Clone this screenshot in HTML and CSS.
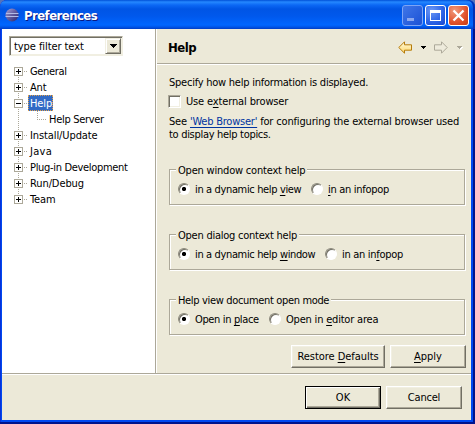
FILE: index.html
```html
<!DOCTYPE html>
<html lang="en">
<head>
<meta charset="utf-8">
<title>Preferences</title>
<link rel="stylesheet" href="styles.css">
</head>
<body>
<div class="window">
  <header class="titlebar">
    <svg class="logo" width="14" height="14" viewBox="0 0 14 14">
      <defs><linearGradient id="orb" x2="1" y2="1"><stop offset="0" stop-color="#aaa4d8"/><stop offset=".45" stop-color="#6862a4"/><stop offset="1" stop-color="#28256b"/></linearGradient></defs>
      <circle cx="7" cy="7" r="6.5" fill="url(#orb)"/>
      <path d="M1 5.5h12.5M.5 8.5h13" stroke="#b4bce6"/>
    </svg>
    <h1 class="title">Preferences</h1>
    <div class="controls">
      <span class="control dim"><svg width="21" height="21"><path d="M5 13h7v3H5z" fill="#8ba8ef"/></svg></span>
      <span class="control"><svg width="21" height="21"><path d="M5 5h11v11H5zM6 8v7h9V8z" fill="#fff" fill-rule="evenodd"/></svg></span>
      <span class="control close"><svg width="21" height="21"><path d="M5.5 5.5l10 10M15.5 5.5l-10 10" stroke="#fff" stroke-width="2.3"/></svg></span>
    </div>
  </header>
  <main class="body">
    <aside class="sidebar">
      <div class="combo"><span class="t-filter">type filter text</span><i class="drop"><svg width="7" height="4"><path d="M0 0h7v1H6v1H5v1H4v1H3V3H2V2H1V1H0z"/></svg></i></div>
      <ul class="tree">
        <li class="first"><i class="box plus"></i><span class="t-general">General</span></li>
        <li><i class="box plus"></i><span class="t-ant">Ant</span></li>
        <li><i class="box"></i><span class="selected">Help</span></li>
        <li class="child"><span class="t-server">Help Server</span></li>
        <li><i class="box plus"></i><span class="t-install">Install/Update</span></li>
        <li><i class="box plus"></i><span class="t-java">Java</span></li>
        <li><i class="box plus"></i><span class="t-plugin">Plug-in Development</span></li>
        <li><i class="box plus"></i><span class="t-run">Run/Debug</span></li>
        <li class="last"><i class="box plus"></i><span class="t-team">Team</span></li>
      </ul>
    </aside>
    <section class="page">
      <div class="heading">
        <h2>Help</h2>
        <svg class="nav" width="66" height="14" viewBox="0 0 66 14">
          <defs><linearGradient id="gold" x2="0" y2="1"><stop offset="0" stop-color="#fffbe0"/><stop offset="1" stop-color="#ffd767"/></linearGradient></defs>
          <path d="M.8 6.5L6.5.8v3h7v5.4h-7v3z" fill="url(#gold)" stroke="#b57b0b"/>
          <path d="M23 5h5v1h-1v1h-1v1h-1V7h-1V6h-1z" fill="#000"/>
          <path d="M49.2 6.5L43.5.8v3h-7v5.4h7v3z" fill="#eeebdc" stroke="#aca899"/>
          <path d="M60 6h5v1h-1v1h-1v1h-1V8h-1z" fill="#fff"/>
          <path d="M59 5h5v1h-1v1h-1v1h-1V7h-1V6h-1z" fill="#aca899"/>
        </svg>
      </div>
      <div class="content">
        <p class="t-specify">Specify how help information is displayed.</p>
        <label class="check"><i class="checkbox"></i><span class="t-external">Use e<u>x</u>ternal browser</span></label>
        <p class="note"><span class="t-see">See <a>'Web Browser'</a> for configuring the external browser used</span><br><span class="t-display">to display help topics.</span></p>
        <fieldset>
          <legend><span class="t-leg1">Open window context help</span></legend>
          <div class="options">
            <label class="w1"><i class="radio on"></i><span class="t-view">in a dynamic help <u>v</u>iew</span></label>
            <label><i class="radio"></i><span class="t-pop"><u>i</u>n an infopop</span></label>
          </div>
        </fieldset>
        <fieldset>
          <legend><span class="t-leg2">Open dialog context help</span></legend>
          <div class="options">
            <label class="w2"><i class="radio on"></i><span class="t-window">in a dynamic help <u>w</u>indow</span></label>
            <label><i class="radio"></i><span class="t-pop">in an in<u>f</u>opop</span></label>
          </div>
        </fieldset>
        <fieldset>
          <legend><span class="t-leg3">Help view document open mode</span></legend>
          <div class="options">
            <label class="w3"><i class="radio on"></i><span class="t-place">Open in <u>p</u>lace</span></label>
            <label><i class="radio"></i><span class="t-editor">Open in <u>e</u>ditor area</span></label>
          </div>
        </fieldset>
        <div class="actions">
          <button class="wide"><span class="t-restore">Restore <u>D</u>efaults</span></button>
          <button><span class="t-apply"><u>A</u>pply</span></button>
        </div>
      </div>
    </section>
  </main>
  <footer class="footer">
    <button class="default"><span class="t-ok">OK</span></button>
    <button><span class="t-cancel">Cancel</span></button>
  </footer>
</div>
</body>
</html>
```
FILE: styles.css
```css
* { box-sizing: border-box; }
body { margin: 0; background: #5573ba; font: 11px/13px "DejaVu Sans Condensed", "DejaVu Sans", sans-serif; font-stretch: condensed; color: #000; }
h1, h2, p, ul { margin: 0; padding: 0; }
ul { list-style: none; }
svg { display: block; }
i { font-style: normal; flex: none; }
span { white-space: nowrap; }
u { text-decoration: underline; text-underline-offset: 2px; text-decoration-thickness: 1px; text-decoration-skip-ink: none; }

.window { width: 475px; height: 424px; display: flex; flex-direction: column; padding: 0 4px 4px 2px; border-radius: 7px 7px 0 0; background: #0048f0; box-shadow: inset -2px -2px 0 #00138c, inset 1px 0 0 #0831d9; }
.titlebar { height: 29px; flex: none; margin: 0 -4px 0 -2px; padding: 5px 6px 0 5px; display: flex; align-items: flex-start; border-radius: 7px 7px 0 0; background: linear-gradient(#0050d8 0, #2588ff 2px, #0c68f5 5px, #0055e5 9px, #0058ec 16px, #0066ff 25px, #0055e8 27px, #003dc4 29px); box-shadow: inset -2px 0 0 #0030b5; }
.logo { margin-top: 3px; }
.title { margin: 2px 0 0 5px; color: #fff; font: bold 13px/18px "DejaVu Sans Condensed", sans-serif; font-stretch: condensed; text-shadow: 1px 1px 0 #0a1883; letter-spacing: -.55px; }
.controls { display: flex; gap: 2px; margin-left: auto; }
.control { width: 21px; height: 21px; border: 1px solid #fff; border-radius: 3px; background: radial-gradient(circle at 30% 25%, #6c98f5, #2a62e5 60%, #1746cf); }
.control svg { margin: -1px; }
.dim { border-color: #7da4f5; background: linear-gradient(135deg, #3f76e8, #1c52d5); }
.close { background: radial-gradient(circle at 30% 25%, #f09a7c, #e1522c 60%, #c63a12); }

.body { height: 344px; display: flex; flex: none; background: #fff; }
.sidebar { width: 154px; flex: none; padding: 7px 0 0 7px; border-right: 1px solid #aca899; margin-right: 1px; }
.combo { width: 114px; height: 20px; display: flex; justify-content: space-between; padding: 1px 1px 1px 4px; line-height: 18px; border: 1px solid; border-color: #aca899 #f1efe2 #f1efe2 #aca899; box-shadow: inset 1px 1px 0 #716f64, inset -1px -1px 0 #f1efe2; }
.drop { width: 16px; height: 16px; display: grid; place-items: center; background: #ece9d8; border: 1px solid; border-color: #f1efe2 #716f64 #716f64 #f1efe2; box-shadow: inset 1px 1px 0 #fff, inset -1px -1px 0 #aca899; }
.tree { margin: 7px 0 0 5px; }
.tree li { height: 16px; display: flex; align-items: center; line-height: 16px; background: linear-gradient(#fff, #fff) 5px 0 / 0 0 no-repeat, repeating-linear-gradient(#aca899 0 1px, transparent 1px 2px) 4px 0 / 1px 16px no-repeat, repeating-linear-gradient(90deg, #aca899 0 1px, transparent 1px 2px) 10px 8px / 4px 1px no-repeat; }
.tree li.first { background-position: 0 0, 4px 8px, 10px 8px; }
.tree li.last { background-size: 0 0, 1px 8px, 4px 1px; }
.tree .child { padding-left: 35px; background: repeating-linear-gradient(#aca899 0 1px, transparent 1px 2px) 4px 0 / 1px 16px no-repeat, repeating-linear-gradient(#aca899 0 1px, transparent 1px 2px) 23px 0 / 1px 8px no-repeat, repeating-linear-gradient(90deg, #aca899 0 1px, transparent 1px 2px) 23px 8px / 9px 1px no-repeat; }
.tree span { padding-top: 1px; }
.box { width: 9px; height: 9px; margin-right: 7px; border: 1px solid #aca899; background: linear-gradient(#000, #000) 1px 3px / 5px 1px no-repeat, #fff; }
.plus { background: linear-gradient(#000, #000) 1px 3px / 5px 1px no-repeat, linear-gradient(#000, #000) 3px 1px / 1px 5px no-repeat, #fff; }
.tree .selected { width: 25px; height: 16px; margin-left: -2px; padding: 0 0 0 1px; border: 1px dotted #e2a14b; background: #316ac5; color: #fff; line-height: 15px; letter-spacing: -.1px; }

.page { flex: 1; min-width: 0; background: #ece9d8; }
.heading { height: 36px; padding: 11px 6px 0 11px; display: flex; justify-content: space-between; border-bottom: 1px solid #fff; box-shadow: inset 0 -1px 0 #aca899; }
h2 { font: bold 13px/15px "DejaVu Sans Condensed", sans-serif; font-stretch: condensed; letter-spacing: -.5px; }
.nav { margin: 1px 1px 0 0; }
.content { padding: 11px 5px 0 11px; }
.check { display: flex; align-items: center; height: 13px; margin-top: 6px; }
.checkbox { width: 13px; height: 13px; margin-right: 5px; background: #fff; border: 1px solid; border-color: #aca899 #fff #fff #aca899; box-shadow: inset 1px 1px 0 #716f64, inset -1px -1px 0 #f1efe2; }
.note { margin-top: 7px; padding-left: 1px; }
.t-specify { padding-left: 1px; }
.note a { color: #0033a0; text-decoration: underline; text-underline-offset: 2px; text-decoration-skip-ink: none; }
fieldset { position: relative; left: 1px; width: 296px; height: 42px; margin: 22px 0 0; padding: 0 0 0 8px; border: 1px solid #aca899; box-shadow: 1px 1px 0 #fff, inset 1px 1px 0 #fff; }
fieldset + fieldset { margin-top: 23px; }
legend { margin-left: -2px; padding: 0 2px; height: 13px; line-height: 15px; background: #ece9d8; }
.options { display: flex; padding-top: 6px; }
.options label { display: flex; align-items: center; height: 13px; }
.options span { position: relative; top: 1px; }
.w1 { width: 133px; } .w2 { width: 147px; } .w3 { width: 91px; }
.radio { width: 12px; height: 12px; margin-right: 5px; border: 1px solid; border-color: #8b887b #fff #fff #8b887b; border-radius: 50%; background: #fff; box-shadow: inset 1px 1px 0 #716f64; }
.on { background: radial-gradient(circle at 5px 5px, #000 1.8px, #fff 2.4px); }
.actions { display: flex; justify-content: flex-end; gap: 5px; margin-top: 10px; }
button { width: 76px; height: 23px; padding: 0; border: 1px solid; border-color: #fff #716f64 #716f64 #fff; box-shadow: inset -1px -1px 0 #aca899, inset 1px 1px 0 #f1efe2; background: #ece9d8; font: inherit; font-stretch: condensed; color: #000; }
.wide { width: 94px; }
.default { border-color: #000; box-shadow: inset 1px 1px 0 #fff, inset -1px -1px 0 #716f64, inset -2px -2px 0 #aca899; }
.footer { flex: 1; display: flex; justify-content: flex-end; gap: 5px; padding: 12px 9px 0 0; background: #ece9d8; border-top: 1px solid #aca899; box-shadow: inset 0 1px 0 #fff; }

/* Per-label tracking */
.t-filter { letter-spacing: -.07px; }
.t-general { letter-spacing: -.35px; }
.t-ant { letter-spacing: -.2px; }
.t-server { letter-spacing: -.3px; }
.t-install { letter-spacing: -.1px; }
.t-java { letter-spacing: .3px; }
.t-plugin { letter-spacing: -.32px; }
.t-run { letter-spacing: -.1px; }
.t-team { letter-spacing: -.1px; }
.t-specify { letter-spacing: -.24px; }
.t-external { letter-spacing: -.14px; }
.t-see { letter-spacing: -.16px; }
.t-see a { letter-spacing: -.23px; }
.t-display { letter-spacing: -.3px; }
.t-leg1 { letter-spacing: -.2px; }
.t-leg2 { letter-spacing: -.24px; }
.t-leg3 { letter-spacing: -.34px; }
.t-view, .t-window { letter-spacing: -.36px; }
.t-pop { letter-spacing: -.3px; }
.t-place { letter-spacing: -.36px; }
.t-editor { letter-spacing: -.2px; }
.t-restore { letter-spacing: -.05px; }
.t-cancel { letter-spacing: -.2px; }
```
